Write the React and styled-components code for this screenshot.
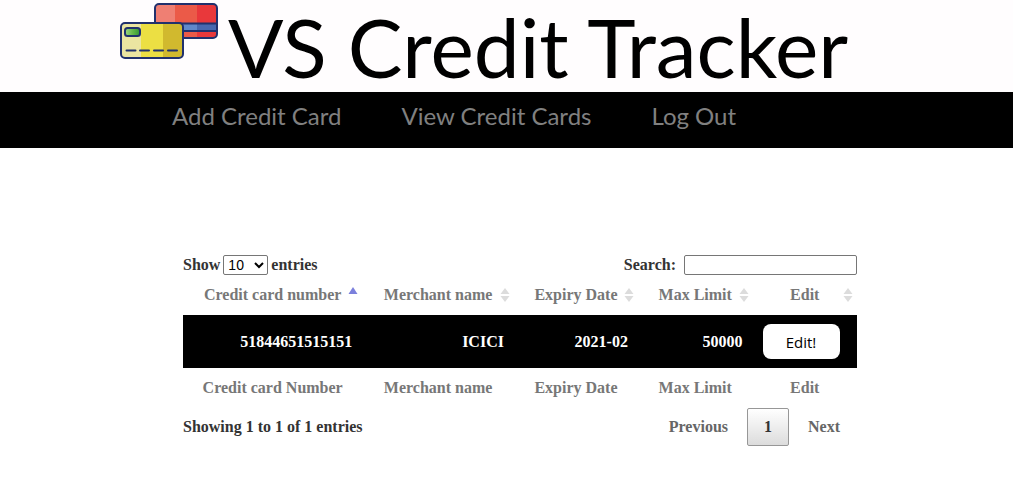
import React from "react";
import styled, { createGlobalStyle } from "styled-components";

const GlobalStyle = createGlobalStyle`
  *, *::before, *::after { box-sizing: border-box; }
  body {
    margin: 0;
    background: #fff;
    color: #333;
    font-family: "Liberation Serif", "Times New Roman", serif;
    font-size: 16px;
    font-weight: 700;
  }
`;

const Header = styled.header`
  display: flex;
  align-items: flex-start;
  gap: 8px;
  height: 92px;
  padding-left: 118px;
  background: #fffdfe;
`;

const Logo = styled.svg`
  flex: none;
  width: 102px;
  height: 62px;
`;

const Title = styled.h1`
  margin: 0;
  color: #000;
  font: 400 82px/92px Lato, "Trebuchet MS", sans-serif;
  white-space: nowrap;
`;

const Nav = styled.nav`
  display: flex;
  gap: 60px;
  height: 56px;
  padding: 8px 0 0 172px;
  background: #000;
`;

const NavLink = styled.a`
  color: #808080;
  font: 400 24px/32px Lato, "Trebuchet MS", sans-serif;
  text-decoration: none;
  white-space: nowrap;
`;

const Main = styled.main`
  margin: 107px 156px 0 183px;
`;

const Bar = styled.div`
  display: flex;
  align-items: center;
  justify-content: space-between;
`;

const Field = styled.label`
  display: flex;
  align-items: center;
  gap: ${(p) => p.$gap}px;
`;

const Select = styled.select`
  width: 45px;
  height: 20px;
  padding: 0;
  border: 1px solid #767676;
  border-radius: 2px;
  background: #fff;
  color: #000;
  font: 400 14px "Liberation Sans", Arial, sans-serif;
`;

const SearchInput = styled.input`
  width: 173px;
  height: 20px;
  padding: 1px 2px;
  border: 1px solid #767676;
  border-radius: 2px;
  background: #fff;
  font: 400 14px "Liberation Sans", Arial, sans-serif;
`;

const Table = styled.table`
  width: 100%;
  table-layout: fixed;
  border-collapse: collapse;
`;

const Col = styled.col`
  width: ${(p) => p.$share}%;
`;

const HeadCell = styled.th`
  height: 40px;
  padding: 0;
  color: #777;
  line-height: 20px;
  text-align: center;
  white-space: nowrap;
`;

const SortLabel = styled.div`
  position: relative;
`;

const SortIcon = styled.svg`
  position: absolute;
  top: 2px;
  right: 4px;
  width: 10px;
  height: 16px;
`;

const BodyRow = styled.tr`
  background: #000;
  color: #fff;
`;

const Cell = styled.td`
  height: 53px;
  padding: 8px 10px;
  text-align: ${(p) => p.$align || "right"};
  line-height: 20px;
`;

const EditButton = styled.button`
  display: block;
  width: 77px;
  height: 35px;
  margin: 0;
  padding: 0;
  border: 0;
  border-radius: 8px;
  background: #fff;
  color: #000;
  font: 400 15px "Open Sans", Tahoma, sans-serif;
`;

const Pager = styled.div`
  display: flex;
  gap: 2px;
`;

const PageButton = styled.button`
  height: 38px;
  padding: 0 16px;
  border: 1px solid ${(p) => (p.$current ? "#979797" : "transparent")};
  border-radius: 2px;
  background: ${(p) => (p.$current ? "linear-gradient(#fff, #dcdcdc)" : "transparent")};
  color: ${(p) => (p.$current ? "#333" : "#666")};
  font: inherit;
`;

const columns = [
  { head: "Credit card number", foot: "Credit card Number", share: 26.6, sorted: true },
  { head: "Merchant name", foot: "Merchant name", share: 22.5 },
  { head: "Expiry Date", foot: "Expiry Date", share: 18.4 },
  { head: "Max Limit", foot: "Max Limit", share: 17 },
  { head: "Edit", foot: "Edit", share: 15.5 },
];

const cards = [["51844651515151", "ICICI", "2021-02", "50000"]];

function CardsLogo() {
  return (
    <Logo viewBox="0 0 102 62" aria-hidden="true">
      <defs>
        <clipPath id="back"><rect x="37" y="4" width="62" height="34" rx="4" /></clipPath>
        <clipPath id="front"><rect x="3" y="23" width="62" height="35" rx="4" /></clipPath>
        <linearGradient id="chip">
          <stop offset="0" stopColor="#9cd582" />
          <stop offset="0.5" stopColor="#65b84a" />
          <stop offset="1" stopColor="#339633" />
        </linearGradient>
      </defs>
      <g clipPath="url(#back)">
        <path fill="#ef7f73" d="M37 4h20v34H37z" />
        <path fill="#eb5a48" d="M57 4h22v34H57z" />
        <path fill="#e9383b" d="M79 4h20v34H79z" />
        <path fill="#6089ca" d="M37 24h42v6H37z" />
        <path fill="#4868af" d="M79 24h20v6H79z" />
        <path stroke="#21316d" strokeWidth="2" d="M37 23.500h62M37 31h62" />
      </g>
      <rect x="37" y="4" width="62" height="34" rx="4" fill="none" stroke="#21316d" strokeWidth="2" />
      <g clipPath="url(#front)">
        <path fill="#ebe5a1" d="M3 23h20v35H3z" />
        <path fill="#ecdf43" d="M23 23h22v35H23z" />
        <path fill="#d1b92e" d="M45 23h20v35H45z" />
      </g>
      <rect x="3" y="23" width="62" height="35" rx="4" fill="none" stroke="#21316d" strokeWidth="2" />
      <rect x="7" y="28" width="15" height="8" rx="2.500" fill="url(#chip)" stroke="#21316d" strokeWidth="2" />
      <path stroke="#21316d" strokeWidth="2" strokeLinecap="round" d="M8.500 50.500h9M22 50.500h9M36 50.500h9M50 50.500h9" />
    </Logo>
  );
}

function SortMark({ sorted }) {
  return (
    <SortIcon viewBox="0 0 10 16" aria-hidden="true">
      {sorted ? (
        <path fill="#7b80dc" d="M5 0l4.500 7h-9z" />
      ) : (
        <path fill="#dcdcdc" d="M5 1l4.500 6h-9zM.5 9h9L5 15z" />
      )}
    </SortIcon>
  );
}

export default function App() {
  return (
    <>
      <GlobalStyle />
      <Header>
        <CardsLogo />
        <Title>VS Credit Tracker</Title>
      </Header>
      <Nav>
        <NavLink href="#add">Add Credit Card</NavLink>
        <NavLink href="#view">View Credit Cards</NavLink>
        <NavLink href="#logout">Log Out</NavLink>
      </Nav>
      <Main>
        <Bar>
          <Field $gap={3}>
            Show
            <Select defaultValue="10">
              <option>10</option>
              <option>25</option>
              <option>50</option>
              <option>100</option>
            </Select>
            entries
          </Field>
          <Field $gap={8}>
            Search:
            <SearchInput type="search" />
          </Field>
        </Bar>
        <Table>
          <colgroup>
            {columns.map((c) => <Col key={c.head} $share={c.share} />)}
          </colgroup>
          <thead>
            <tr>
              {columns.map((c) => (
                <HeadCell key={c.head} scope="col">
                  <SortLabel>
                    {c.head}
                    <SortMark sorted={c.sorted} />
                  </SortLabel>
                </HeadCell>
              ))}
            </tr>
          </thead>
          <tbody>
            {cards.map((card) => (
              <BodyRow key={card[0]}>
                {card.map((value) => <Cell key={value}>{value}</Cell>)}
                <Cell $align="left"><EditButton type="button">Edit!</EditButton></Cell>
              </BodyRow>
            ))}
          </tbody>
          <tfoot>
            <tr>
              {columns.map((c) => <HeadCell key={c.foot}>{c.foot}</HeadCell>)}
            </tr>
          </tfoot>
        </Table>
        <Bar>
          <span>Showing 1 to 1 of 1 entries</span>
          <Pager>
            <PageButton type="button">Previous</PageButton>
            <PageButton type="button" $current>1</PageButton>
            <PageButton type="button">Next</PageButton>
          </Pager>
        </Bar>
      </Main>
    </>
  );
}
